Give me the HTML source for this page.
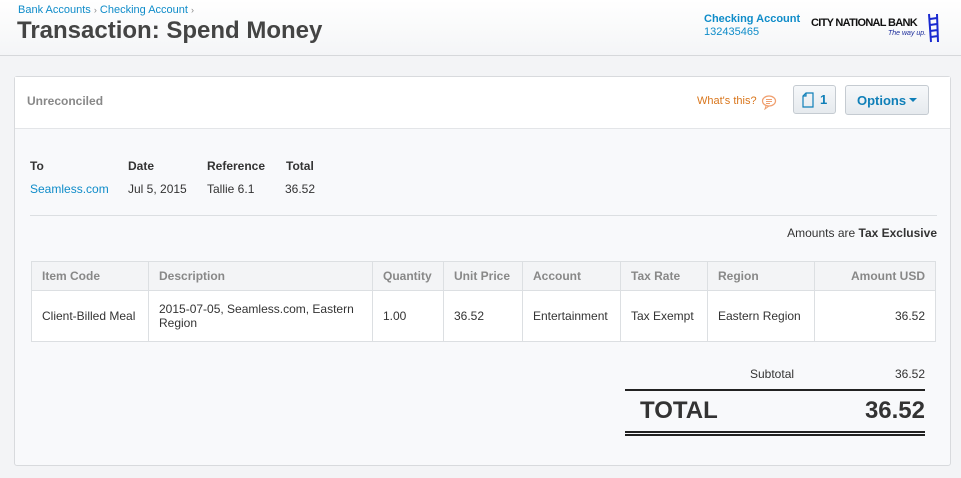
<!DOCTYPE html>
<html><head><meta charset="utf-8"><style>
*{margin:0;padding:0;box-sizing:border-box}
body{width:961px;height:478px;background:#f3f4f6;font-family:"Liberation Sans",Arial,sans-serif;font-size:12px;color:#333;position:relative;overflow:hidden}
.hdr{position:absolute;left:0;top:0;width:961px;height:56px;background:linear-gradient(#fff,#f4f5f7);border-bottom:1px solid #d6d8db}
.a{color:#0f8cc9}
.abs{position:absolute;white-space:nowrap}
.panel{position:absolute;left:14px;top:76px;width:937px;height:390px;background:#f8f9fb;border:1px solid #d8dadd;border-radius:3px}
.ph{position:absolute;left:0;top:0;width:935px;height:52px;background:#fff;border-bottom:1px solid #e3e5e8}
.btn{position:absolute;border:1px solid #c5cbd1;border-radius:3px;background:linear-gradient(#f6f8fa,#e6eaee);color:#0f7fb8;font-weight:bold;font-size:13px}
table{position:absolute;left:31px;top:261px;border-collapse:collapse;background:#fff}
td,th{border:1px solid #dcdfe2;padding:0 10px;font-size:12px;text-align:left}
th{background:#f3f4f6;color:#888;font-weight:bold;height:29px}
td{height:51px;color:#333}
</style></head><body>
<div class="hdr">
<div class="abs a" style="left:18px;top:4px;font-size:11px">Bank Accounts <span style="color:#888;font-size:9px">›</span> Checking Account <span style="color:#888;font-size:9px">›</span></div>
<div class="abs" style="left:17px;top:17px;font-size:24px;font-weight:bold;color:#444">Transaction: Spend Money</div>
<div class="abs a" style="left:704px;top:13px;font-size:11px;font-weight:bold">Checking Account</div>
<div class="abs a" style="left:704px;top:26px;font-size:11px">132435465</div>
<div class="abs" style="left:811px;top:17px;font-size:11px;font-weight:bold;letter-spacing:-0.7px;color:#111">CITY NATIONAL BANK</div>
<div class="abs" style="left:888px;top:30px;font-size:7px;color:#1a2a9a;font-style:italic">The way up.</div>
<svg class="abs" style="left:926px;top:13px" width="16" height="30"><path d="M3 1 L5 29 M11 1 L12 29 M4 6 L11 5 M4 12 L11 11 M4 18 L12 17 M5 24 L12 23" stroke="#1a2ad0" stroke-width="2" fill="none"/></svg>
</div>
<div class="panel">
<div class="ph">
<div class="abs" style="left:12px;top:17px;color:#888;font-weight:bold">Unreconciled</div>
<div class="abs" style="left:682px;top:18px;color:#d9761c;font-size:11px">What's this?</div>
<svg class="abs" style="left:746px;top:17px" width="16" height="16"><ellipse cx="8" cy="7" rx="6.5" ry="5" fill="none" stroke="#f0a070" stroke-width="1.3"/><path d="M5 12 L4 15 L8 12" fill="none" stroke="#f0a070"/><path d="M5 5.5h6M5 7.5h6M5 9.5h4" stroke="#f0a070"/></svg>
<div class="btn" style="left:778px;top:8px;width:43px;height:29px"><svg class="abs" style="left:8px;top:6px" width="12" height="16"><path d="M4 1h7v14H1V4z M1 4h3V1" fill="none" stroke="#0f7fb8" stroke-width="1.2"/></svg><span class="abs" style="left:26px;top:6px">1</span></div>
<div class="btn" style="left:830px;top:8px;width:84px;height:30px"><span class="abs" style="left:11px;top:7px">Options</span><span class="abs" style="left:63px;top:12px;border:4px solid transparent;border-top:4px solid #0f7fb8"></span></div>
</div>
<div class="abs" style="left:15px;top:82px;font-weight:bold">To</div>
<div class="abs" style="left:113px;top:82px;font-weight:bold">Date</div>
<div class="abs" style="left:192px;top:82px;font-weight:bold">Reference</div>
<div class="abs" style="left:271px;top:82px;font-weight:bold">Total</div>
<div class="abs a" style="left:15px;top:105px">Seamless.com</div>
<div class="abs" style="left:113px;top:105px">Jul 5, 2015</div>
<div class="abs" style="left:192px;top:105px">Tallie 6.1</div>
<div class="abs" style="left:270px;top:105px">36.52</div>
<div class="abs" style="left:15px;top:138px;width:907px;border-top:1px solid #dcdfe2"></div>
<div class="abs" style="right:13px;top:149px">Amounts are <b>Tax Exclusive</b></div>
<div class="abs" style="left:735px;top:290px">Subtotal</div>
<div class="abs" style="right:25px;top:290px">36.52</div>
<div class="abs" style="left:610px;top:312px;width:300px;border-top:2px solid #222"></div>
<div class="abs" style="left:625px;top:320px;font-size:24px;font-weight:bold;color:#333">TOTAL</div>
<div class="abs" style="right:25px;top:320px;font-size:24px;font-weight:bold;color:#333">36.52</div>
<div class="abs" style="left:610px;top:354px;width:300px;height:5px;border-top:2px solid #222;border-bottom:2px solid #222"></div>
</div>
<table>
<tr><th style="width:117px">Item Code</th><th style="width:224px">Description</th><th style="width:71px">Quantity</th><th style="width:79px">Unit Price</th><th style="width:98px">Account</th><th style="width:87px">Tax Rate</th><th style="width:107px">Region</th><th style="width:121px;text-align:right">Amount USD</th></tr>
<tr><td>Client-Billed Meal</td><td>2015-07-05, Seamless.com, Eastern<br>Region</td><td>1.00</td><td>36.52</td><td>Entertainment</td><td>Tax Exempt</td><td>Eastern Region</td><td style="text-align:right">36.52</td></tr>
</table>
</body></html>
